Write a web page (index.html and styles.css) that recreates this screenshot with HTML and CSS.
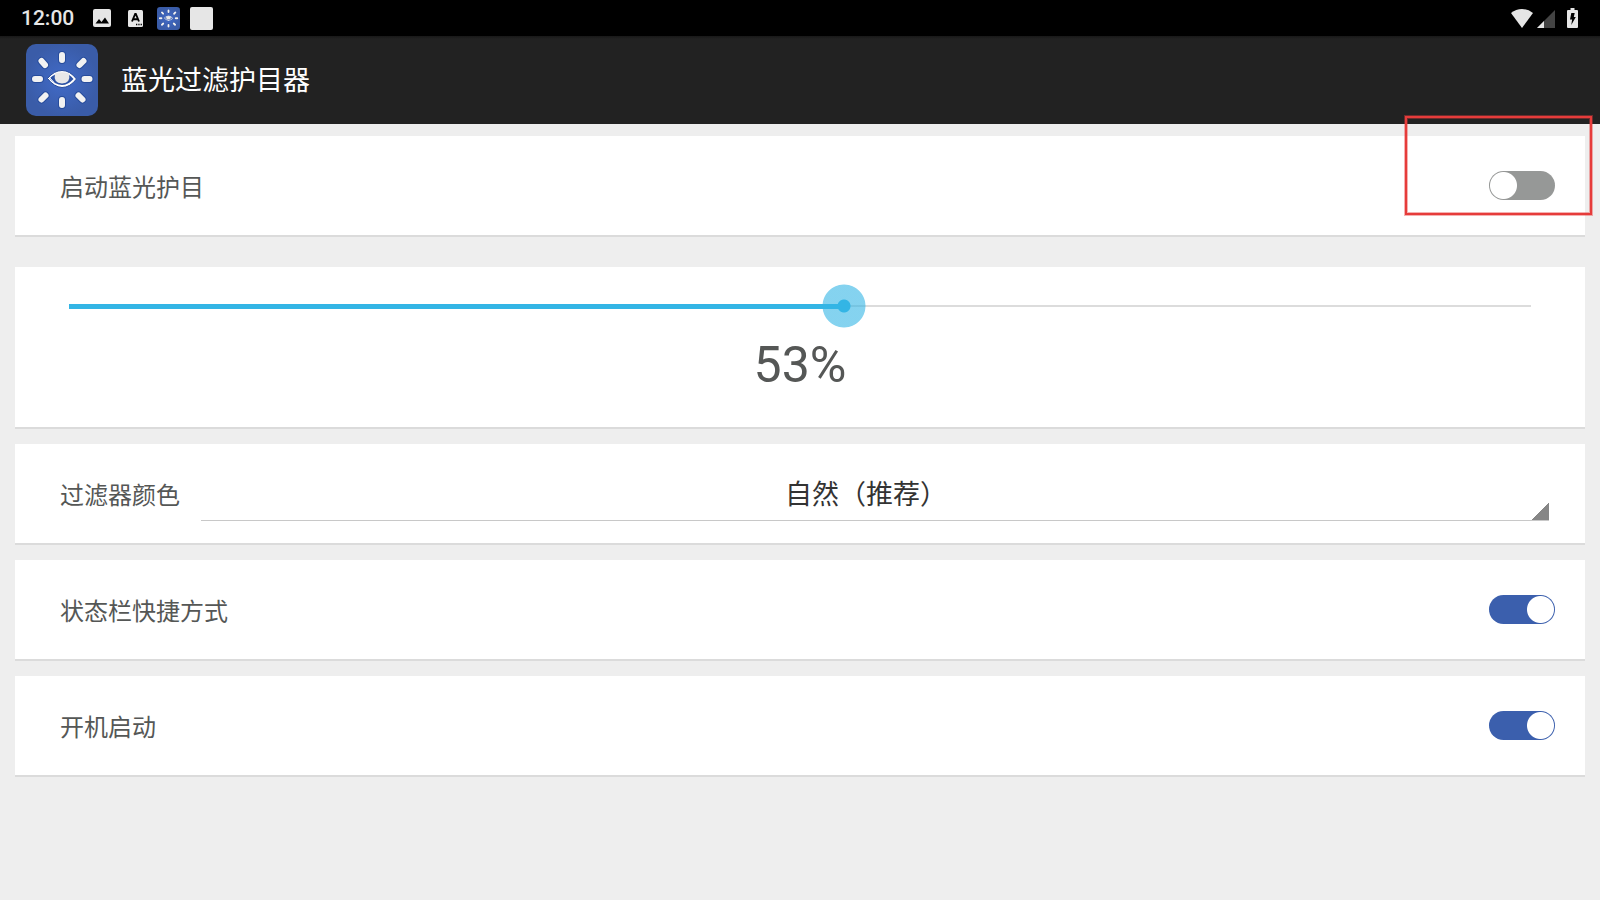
FILE: index.html
```html
<!DOCTYPE html>
<html lang="zh-CN">
<head>
<meta charset="utf-8">
<meta name="viewport" content="width=device-width, initial-scale=1">
<title>蓝光过滤护目器</title>
<link rel="stylesheet" href="styles.css">
</head>
<body>
<svg class="defs" width="0" height="0" aria-hidden="true">
  <defs>
    <radialGradient id="glow"><stop offset="0" stop-color="#416bc9"/><stop offset="1" stop-color="#3a5ca8"/></radialGradient>
  </defs>
  <symbol id="logo" viewBox="0 0 72 72">
    <rect width="72" height="72" rx="10" fill="url(#glow)"/>
    <g fill="none" stroke-linecap="round">
      <path stroke="#274c9c" stroke-width="8" d="M36 11v5M36 56v5M9 35h5M58.500 35h5M15.500 17l3.500 4M57.500 17l-4 4M15.500 55.500l4-4M56.500 55.500l-4-4"/>
      <path stroke="#f2f2f2" stroke-width="6" d="M36 11v5M36 56v5M9 35h5M58.500 35h5M15.500 17l3.500 4M57.500 17l-4 4M15.500 55.500l4-4M56.500 55.500l-4-4"/>
    </g>
    <path d="M21.500 34.500Q28 26.500 36 26.500Q44 26.500 50.500 35Q44 43.500 36 43.500Q28 43 21.500 34.500Z" fill="#fff" stroke="#274c9c" stroke-width="1"/>
    <path d="M23.500 34.500Q29 29 36 29Q43 29 47.500 35Q42 41 36 41Q29 41 23.500 34.500Z" fill="#2c52a5"/>
    <path d="M29 29.500Q36 27 43 29.500Q45 39 36 39.500Q27 39 29 29.500Z" fill="#e8e8e8"/>
    <path d="M23.500 33.500L28 38.500" fill="none" stroke="#fff" stroke-width="1"/>
  </symbol>
</svg>

<header>
  <div class="status-bar">
    <time class="clock">12:00</time>
    <svg class="icon-picture" viewBox="0 0 18 18" aria-hidden="true"><rect width="18" height="18" rx="2" fill="#e6e6e6"/><path d="M2.500 14.500L6 10l2.500 3L12 8.500l4 6z" fill="#000"/></svg>
    <svg class="icon-letter" viewBox="0 0 15 17" aria-hidden="true"><rect width="15" height="17" rx="1.500" fill="#e6e6e6"/><path d="M4 11.500L7.200 4h.6L11 11.500M5.200 9.300h4.600" fill="none" stroke="#000" stroke-width="1.900"/><path d="M8 14.500h1.300M10.300 14.500h1.300M12.600 14.500h1.300" stroke="#000" stroke-width="1.400"/></svg>
    <svg class="icon-notice" aria-hidden="true"><use href="#logo"/></svg>
    <span class="blank-notice"></span>
    <span class="system-icons">
      <svg class="icon-wifi" viewBox="0 0 22 19" aria-hidden="true"><path d="M0 4Q5 0 11 0T22 4L11 19Z" fill="#e6e6e6"/></svg>
      <svg class="icon-signal" viewBox="0 0 18 18" aria-hidden="true"><path d="M18 0v18H0z" fill="#444"/><path d="M7 11v7H0z" fill="#e6e6e6"/></svg>
      <svg class="icon-battery" viewBox="0 0 11 20" aria-hidden="true"><path d="M3.500 0h4v2H10q1 0 1 1v16q0 1-1 1H1q-1 0-1-1V3q0-1 1-1h2.500z" fill="#e6e6e6"/><path d="M4.300 5h3.400l-.9 4h2L4.300 17l.8-5.500H3z" fill="#000"/></svg>
    </span>
  </div>
  <div class="app-bar">
    <svg class="app-logo" aria-hidden="true"><use href="#logo"/></svg>
    <h1 class="app-title">蓝光过滤护目器</h1>
  </div>
</header>

<main class="settings">
  <section class="card row highlighted">
    <label class="name" for="enable">启动蓝光护目</label>
    <input class="switch" type="checkbox" role="switch" id="enable">
  </section>
  <section class="card level">
    <input class="slider" type="range" id="strength" min="0" max="100" value="53" style="--value: 0.53" aria-label="滤光强度">
    <output class="percent" for="strength">53%</output>
  </section>
  <section class="card row choice">
    <label class="name" for="color">过滤器颜色</label>
    <select class="spinner" id="color"><option>自然（推荐）</option></select>
  </section>
  <section class="card row">
    <label class="name" for="shortcut">状态栏快捷方式</label>
    <input class="switch" type="checkbox" role="switch" id="shortcut" checked>
  </section>
  <section class="card row">
    <label class="name" for="boot">开机启动</label>
    <input class="switch" type="checkbox" role="switch" id="boot" checked>
  </section>
</main>
</body>
</html>
```
FILE: styles.css
```css
*,
*::after {
  box-sizing: border-box;
}

body {
  margin: 0;
  background: #eee;
  color: #555756;
  font-family: Roboto, "Noto Sans CJK SC", sans-serif;
}

.defs {
  position: absolute;
}

.status-bar {
  display: flex;
  align-items: center;
  height: 36px;
  padding: 0 22px 0 21px;
  background: #000;
}

.clock {
  padding-top: 1px;
  color: #e6e6e6;
  font-size: 21px;
  font-weight: 500;
  line-height: 35px;
}

.icon-picture {
  width: 18px;
  height: 18px;
  margin-left: 19px;
}

.icon-letter {
  width: 15px;
  height: 17px;
  margin-left: 17px;
}

.icon-notice {
  width: 23px;
  height: 23px;
  margin-left: 14px;
}

.blank-notice {
  width: 23px;
  height: 23px;
  margin-left: 10px;
  border-radius: 2px;
  background: #e6e6e6;
}

.system-icons {
  display: flex;
  align-items: flex-end;
  margin-left: auto;
}

.icon-wifi {
  width: 22px;
  height: 19px;
}

.icon-signal {
  width: 18px;
  height: 18px;
  margin-left: 4px;
}

.icon-battery {
  width: 11px;
  height: 20px;
  margin-left: 12px;
}

.app-bar {
  display: flex;
  align-items: center;
  gap: 23px;
  padding: 8px 26px;
  background: linear-gradient(#181818, #222 3px);
}

.app-logo {
  width: 72px;
  height: 72px;
}

.app-title {
  margin: 0;
  padding-top: 2px;
  color: #fff;
  font-size: 27px;
  font-weight: 400;
  line-height: 40px;
}

.settings {
  display: flex;
  flex-direction: column;
  gap: 15px;
  padding: 12px 15px;
}

.card {
  border-bottom: 2px solid #dbdbdb;
  background: #fff;
}

.row {
  display: flex;
  align-items: center;
  justify-content: space-between;
  padding: 22px 30px 22px 45px;
}

.name {
  padding: 13px 0 7px;
  font-size: 24px;
  line-height: 35px;
}

.switch {
  appearance: none;
  width: 66px;
  height: 29px;
  margin: 0;
  border-radius: 15px;
  background: radial-gradient(circle, #fff 13px, transparent 14px) 1px 1px / 27px 27px no-repeat #969897;
}

.switch:checked {
  background-color: #3b5fad;
  background-position: 38px 1px;
}

.highlighted {
  position: relative;
  margin-bottom: 15px;
}

.highlighted::after {
  content: "";
  position: absolute;
  top: -20px;
  right: -7px;
  width: 187px;
  height: 99px;
  border: 2px solid #e63c3b;
  box-shadow: 0 0 0 1px #e63c3b66, inset 0 0 0 1px #e63c3b66;
  pointer-events: none;
}

.level {
  display: flex;
  flex-direction: column;
  align-items: center;
  padding: 17px 32px 28px;
}

.slider {
  appearance: none;
  width: 100%;
  height: 44px;
  margin: 0;
  background: none;
}

.slider::-webkit-slider-runnable-track {
  height: 44px;
  background:
    linear-gradient(#33b5e5, #33b5e5) 22px 20px / calc((100% - 44px) * var(--value)) 5px no-repeat,
    linear-gradient(#dcdcdc, #dcdcdc) 22px 21px / calc(100% - 44px) 2px no-repeat;
}

.slider::-webkit-slider-thumb {
  appearance: none;
  width: 44px;
  height: 44px;
  border-radius: 50%;
  background: radial-gradient(circle, #33b5e5 6px, #33b5e599 7px, #33b5e599 21px, transparent 22px);
}

.percent {
  padding-top: 4px;
  font-size: 50px;
  line-height: 67px;
}

.choice {
  gap: 21px;
  padding-right: 36px;
}

.spinner {
  appearance: none;
  flex: 1;
  height: 55px;
  padding: 4px 18px 0 0;
  border: 0;
  border-bottom: 1px solid #c8c8c8;
  border-radius: 0;
  background: linear-gradient(135deg, transparent 50%, #868686 50%) right bottom / 18px 18px no-repeat;
  color: #333;
  font: inherit;
  font-size: 27px;
  text-align: center;
  text-align-last: center;
}
```
